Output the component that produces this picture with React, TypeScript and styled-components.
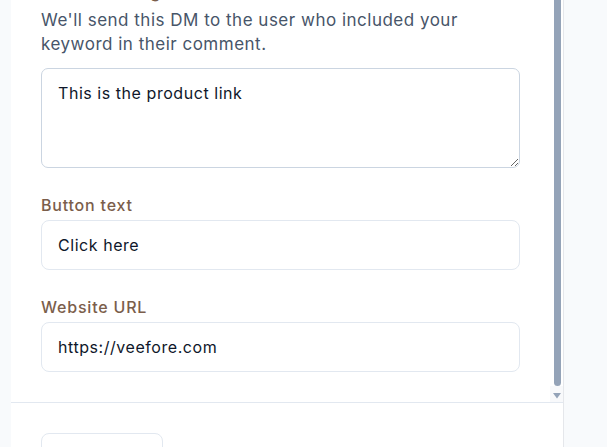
import React, { useLayoutEffect, useRef } from "react";
import styled, { createGlobalStyle } from "styled-components";

const Global = createGlobalStyle`
  html, body { margin: 0; padding: 0; overflow: hidden; background: #f8fafc; }
  body { font-family: Inter, "Noto Sans", sans-serif; -webkit-font-smoothing: antialiased; }
  * { box-sizing: border-box; }
`;

const Frame = styled.div`
  display: flex;
  padding-left: 11px;
  background: #f8fafc;
`;

const Panel = styled.div`
  width: 553px;
  background: #ffffff;
  border-right: 1px solid #e5e7eb;
  display: flex;
  flex-direction: column;
`;

const Header = styled.div`
  height: 64px;
  padding: 20px 30px;
  font-size: 18px;
  font-weight: 600;
  color: #0f172a;
  border-bottom: 1px solid #e2e8f0;
`;

const BodyWrap = styled.div`
  display: flex;
  height: 480px;
`;

const Scroller = styled.div`
  flex: 1;
  min-width: 0;
  overflow: hidden;
  padding: 24px 30px 30px 30px;
  display: flex;
  flex-direction: column;
  gap: 25px;
`;

const ScrollTrack = styled.div`
  width: 13px;
  display: flex;
  flex-direction: column;
  align-items: center;
  background: #ffffff;
`;

const Thumb = styled.div`
  flex: 1;
  width: 7px;
  margin-left: 1px;
  background: #94a3b8;
  border-radius: 4px;
`;

const ArrowBox = styled.div`
  width: 13px;
  height: 16px;
  padding-top: 7px;
  display: flex;
  justify-content: center;
  background: #f8f9fb;
`;

const Field = styled.div`
  display: flex;
  flex-direction: column;
`;

const Label = styled.label`
  font-size: 16px;
  line-height: 24px;
  font-weight: 500;
  letter-spacing: 0.8px;
  color: #7b5e4b;
  margin-bottom: 3px;
`;

const Hint = styled.p`
  margin: 1px 0 12px;
  font-size: 17px;
  line-height: 24px;
  letter-spacing: 0.5px;
  color: #475569;
`;

const TextArea = styled.textarea`
  display: block;
  width: 100%;
  height: 100px;
  padding: 12px 16px;
  border: 1px solid #cbd5e1;
  border-radius: 7px;
  font-family: inherit;
  font-size: 16px;
  line-height: 24px;
  letter-spacing: 0.55px;
  color: #0f172a;
  background: #ffffff;
  resize: vertical;
  outline: none;
`;

const Input = styled.input`
  display: block;
  width: 100%;
  height: 50px;
  padding: 0 16px;
  border: 1px solid #e2e8f0;
  border-radius: 8px;
  font-family: inherit;
  font-size: 16px;
  letter-spacing: 0.55px;
  color: #0f172a;
  background: #ffffff;
  outline: none;
`;

const Footer = styled.div`
  border-top: 1px solid #e2e8f0;
  padding: 30px 30px;
  display: flex;
  gap: 12px;
`;

const Button = styled.button`
  width: 122px;
  height: 42px;
  border-radius: 8px;
  font-family: inherit;
  font-size: 15px;
  font-weight: 500;
  border: 1px solid #e2e8f0;
  background: #ffffff;
  color: #0f172a;
`;

const Side = styled.div`
  flex: 1;
  background: #f8fafc;
`;

export default function App() {
  const scrollRef = useRef<HTMLDivElement>(null);
  const footerRef = useRef<HTMLDivElement>(null);

  useLayoutEffect(() => {
    const scroller = scrollRef.current;
    const footer = footerRef.current;
    if (!scroller || !footer) return;
    const top = footer.getBoundingClientRect().top + window.scrollY;
    window.scrollTo(0, top - 402);
    scroller.scrollTop = scroller.scrollHeight;
  }, []);

  return (
    <Frame>
      <Global />
      <Panel>
        <Header>Send a DM</Header>
        <BodyWrap>
          <Scroller ref={scrollRef}>
            <Field>
              <Label>Trigger keyword</Label>
              <Input defaultValue="LINK" readOnly />
            </Field>
            <Field>
              <Label>Direct message</Label>
              <Hint>We'll send this DM to the user who included your keyword in their comment.</Hint>
              <TextArea defaultValue="This is the product link" />
            </Field>
            <Field>
              <Label>Button text</Label>
              <Input defaultValue="Click here" />
            </Field>
            <Field>
              <Label>Website URL</Label>
              <Input defaultValue="https://veefore.com" />
            </Field>
          </Scroller>
          <ScrollTrack aria-hidden>
            <Thumb />
            <ArrowBox>
              <svg width="8" height="6" viewBox="0 0 8 6">
                <path d="M0 0 H8 L4 5.5 Z" fill="#94a3b8" />
              </svg>
            </ArrowBox>
          </ScrollTrack>
        </BodyWrap>
        <Footer ref={footerRef}>
          <Button>Cancel</Button>
        </Footer>
      </Panel>
      <Side />
    </Frame>
  );
}
